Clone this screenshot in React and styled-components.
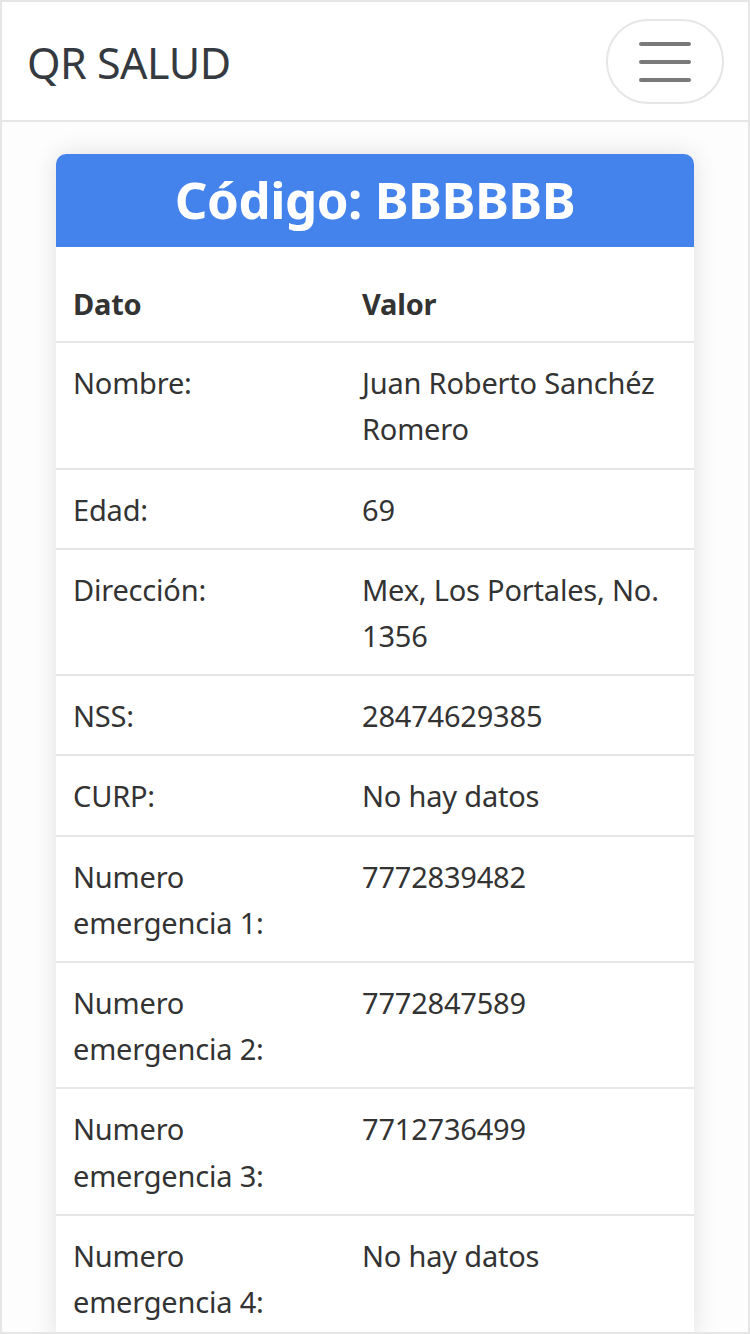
import styled, { createGlobalStyle } from 'styled-components'

const rows = [
	['Nombre:', 'Juan Roberto Sanchéz Romero'],
	['Edad:', '69'],
	['Dirección:', 'Mex, Los Portales, No. 1356'],
	['NSS:', '28474629385'],
	['CURP:', 'No hay datos'],
	['Numero emergencia 1:', '7772839482'],
	['Numero emergencia 2:', '7772847589'],
	['Numero emergencia 3:', '7712736499'],
	['Numero emergencia 4:', 'No hay datos'],
]

export default function App() {
	return (
		<>
			<GlobalStyle />
			<Frame>
				<Navbar>
					<Brand>QR SALUD</Brand>
					<Toggler aria-label="menu">
						<Bar />
						<Bar />
						<Bar />
					</Toggler>
				</Navbar>
				<Main>
					<Card>
						<CardHeader>Código: BBBBBB</CardHeader>
						<Table>
							<colgroup>
								<col style={{ width: '289px' }} />
								<col />
							</colgroup>
							<thead>
								<tr>
									<Th>Dato</Th>
									<Th>Valor</Th>
								</tr>
							</thead>
							<tbody>
								{rows.map(([k, v]) => (
									<tr key={k}>
										<Td>{k}</Td>
										<Td>{v}</Td>
									</tr>
								))}
							</tbody>
						</Table>
					</Card>
				</Main>
			</Frame>
		</>
	)
}

const GlobalStyle = createGlobalStyle`
	* { box-sizing: border-box; }
	body {
		margin: 0;
		font-family: 'Noto Sans', 'Open Sans', sans-serif;
		color: #333;
		background: #fff;
	}
`

const Frame = styled.div`
	height: 100vh;
	border: 2px solid #e6e6e6;
	overflow: hidden;
	background: #fdfdfd;
`

const Navbar = styled.nav`
	display: flex;
	align-items: center;
	justify-content: space-between;
	height: 120px;
	padding: 0 24px 0 25px;
	background: #fff;
	border-bottom: 2px solid #e6e6e6;
`

const Brand = styled.span`
	font-size: 43px;
	font-weight: 400;
	color: #343a40;
	letter-spacing: -0.5px;
	margin-top: 2px;
`

const Toggler = styled.button`
	width: 118px;
	height: 85px;
	border: 2px solid #e6e6e6;
	border-radius: 42px;
	background: #fff;
	display: flex;
	flex-direction: column;
	align-items: center;
	justify-content: center;
	gap: 14px;
	margin-top: 1px;
`

const Bar = styled.span`
	display: block;
	width: 52px;
	height: 4px;
	border-radius: 2px;
	background: #7a7a7a;
`

const Main = styled.main`
	padding: 32px 54px 0;
`

const Card = styled.div`
	background: #fff;
	border-radius: 10px;
	overflow: hidden;
	box-shadow: 0 0 24px rgba(0, 0, 0, 0.12);
`

const CardHeader = styled.h1`
	margin: 0;
	height: 93px;
	display: flex;
	align-items: center;
	justify-content: center;
	background: #4583ec;
	color: #fff;
	font-size: 51px;
	font-weight: 700;
	letter-spacing: -0.5px;
	padding-bottom: 4px;
`

const Table = styled.table`
	width: 100%;
	border-collapse: collapse;
	table-layout: fixed;
	font-size: 29px;
	line-height: 46.2px;
	letter-spacing: -0.2px;
`

const Th = styled.th`
	text-align: left;
	font-weight: 700;
	padding: 34px 17px 14px;
	border-bottom: 2px solid #e6e6e6;
`

const Td = styled.td`
	vertical-align: top;
	padding: 17px 17px 15px;
	border-bottom: 2px solid #e6e6e6;
`
